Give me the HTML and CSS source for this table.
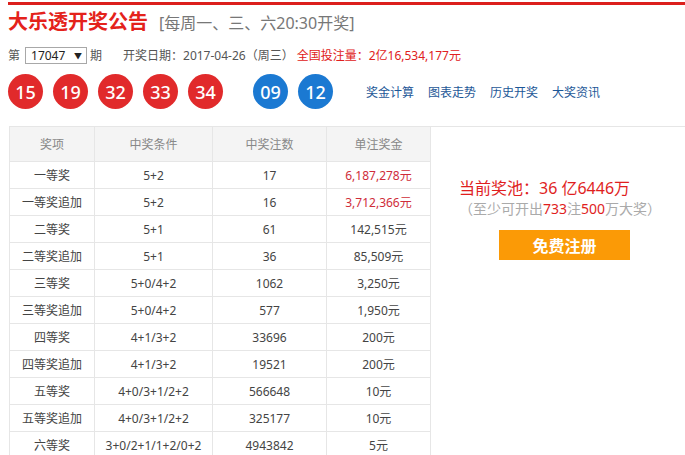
FILE: index.html
```html
<!DOCTYPE html>
<html lang="zh-CN">
<head>
<meta charset="utf-8">
<title>大乐透开奖公告</title>
<link rel="stylesheet" href="styles.css">
</head>
<body>
<div class="page">
  <div class="topbar"></div>
  <div class="title-row">
    <h1 class="title">大乐透开奖公告</h1>
    <span class="subtitle">[每周一、三、六20:30开奖]</span>
  </div>
  <div class="info-row">
    <span>第</span>
    <span class="select"><span class="sel-val">17047</span><span class="sel-arrow">▼</span></span>
    <span>期</span>
    <span class="date">开奖日期：2017-04-26（周三）</span>
    <span class="total">全国投注量：2亿16,534,177元</span>
  </div>
  <div class="balls-row">
    <span class="ball red">15</span>
    <span class="ball red">19</span>
    <span class="ball red">32</span>
    <span class="ball red">33</span>
    <span class="ball red">34</span>
    <span class="ball blue first-blue">09</span>
    <span class="ball blue">12</span>
    <nav class="links">
      <a href="#">奖金计算</a>
      <a href="#">图表走势</a>
      <a href="#">历史开奖</a>
      <a href="#">大奖资讯</a>
    </nav>
  </div>
  <div class="main">
    <table class="prize">
      <colgroup>
        <col class="c1"><col class="c2"><col class="c3"><col class="c4">
      </colgroup>
      <thead>
        <tr><th>奖项</th><th>中奖条件</th><th>中奖注数</th><th>单注奖金</th></tr>
      </thead>
      <tbody>
        <tr><td>一等奖</td><td>5+2</td><td>17</td><td class="hl">6,187,278元</td></tr>
        <tr><td>一等奖追加</td><td>5+2</td><td>16</td><td class="hl">3,712,366元</td></tr>
        <tr><td>二等奖</td><td>5+1</td><td>61</td><td>142,515元</td></tr>
        <tr><td>二等奖追加</td><td>5+1</td><td>36</td><td>85,509元</td></tr>
        <tr><td>三等奖</td><td>5+0/4+2</td><td>1062</td><td>3,250元</td></tr>
        <tr><td>三等奖追加</td><td>5+0/4+2</td><td>577</td><td>1,950元</td></tr>
        <tr><td>四等奖</td><td>4+1/3+2</td><td>33696</td><td>200元</td></tr>
        <tr><td>四等奖追加</td><td>4+1/3+2</td><td>19521</td><td>200元</td></tr>
        <tr><td>五等奖</td><td>4+0/3+1/2+2</td><td>566648</td><td>10元</td></tr>
        <tr><td>五等奖追加</td><td>4+0/3+1/2+2</td><td>325177</td><td>10元</td></tr>
        <tr><td>六等奖</td><td>3+0/2+1/1+2/0+2</td><td>4943842</td><td>5元</td></tr>
      </tbody>
    </table>
    <aside class="pool">
      <p class="pool-amount">当前奖池：36 亿6446万</p>
      <p class="pool-note">（至少可开出<em>733</em>注<em>500</em>万大奖）</p>
      <a class="reg-btn" href="#">免费注册</a>
    </aside>
  </div>
</div>
</body>
</html>
```

FILE: styles.css
```css
* { box-sizing: border-box; }
html, body { margin: 0; padding: 0; background: #fff; }
body {
  font-family: "Noto Sans", "Noto Sans CJK SC", sans-serif;
  color: #333;
  font-size: 12px;
  overflow: hidden;
}
.page { padding-left: 8px; width: 700px; }
.topbar { height: 3px; margin-top: 2px; background: #dc1f1c; }
.title-row {
  display: flex;
  align-items: baseline;
  gap: 11px;
  margin-top: 3px;
  height: 26px;
  line-height: 26px;
}
.title {
  margin: 0;
  font-size: 20px;
  font-weight: bold;
  color: #e4221b;
  font-family: "Noto Sans CJK SC", sans-serif;
}
.subtitle { font-size: 16px; color: #777; font-family: "Noto Sans", "Noto Sans CJK SC", sans-serif; }
.info-row {
  display: flex;
  align-items: center;
  margin-top: 10px;
  height: 22px;
  color: #555;
}
.select {
  display: inline-flex;
  align-items: center;
  justify-content: space-between;
  width: 62px;
  height: 17px;
  margin: 0 3px 0 5px;
  padding: 0 4px 0 5px;
  border: 1px solid #a8a8a8;
  color: #222;
  font-size: 12px;
}
.sel-arrow { font-size: 8px; color: #222; }
.date { margin-left: 21px; }
.total { margin-left: 3px; color: #e02020; }
.balls-row {
  display: flex;
  align-items: center;
  gap: 10px;
  margin-top: 8px;
  height: 35px;
}
.ball {
  width: 35px;
  height: 35px;
  border-radius: 50%;
  display: flex;
  align-items: center;
  justify-content: center;
  color: #fff;
  font-size: 18px;
  font-weight: 500;
}
.ball.red { background: #e12a2b; }
.ball.blue { background: #1b79d2; }
.first-blue { margin-left: 20px; }
.links { display: flex; gap: 14px; margin-left: 23px; }
.links a { color: #1d5797; text-decoration: none; font-size: 12px; }
.main {
  display: flex;
  margin-top: 17px;
  margin-left: 1px;
  border-top: 1px solid #e6e6e6;
}
.prize {
  border-collapse: collapse;
  width: 421px;
  table-layout: fixed;
  margin-top: -1px;
}
.c1 { width: 85px; }
.c2 { width: 118px; }
.c3 { width: 114px; }
.c4 { width: 104px; }
.prize th, .prize td {
  border: 1px solid #e6e6e6;
  text-align: center;
  padding: 0;
  font-size: 12px;
}
.prize th {
  height: 35px;
  background: #f4f4f4;
  color: #888;
  font-weight: normal;
}
.prize td { height: 27px; color: #444; }
.prize td.hl { color: #cf2d3a; }
.pool {
  flex: 1;
  padding-left: 28px;
  padding-top: 51px;
}
.pool p { margin: 0; }
.pool-amount { font-size: 16px; color: #e01e1e; line-height: 20px; }
.pool-note { font-size: 14px; color: #aaa; line-height: 20px; margin-top: 1px !important; }
.pool-note em { font-style: normal; color: #e01e1e; }
.reg-btn {
  display: flex;
  align-items: center;
  justify-content: center;
  width: 131px;
  height: 30px;
  margin: 11px 0 0 40px;
  background: #fb9a06;
  color: #fff;
  font-size: 16px;
  font-weight: bold;
  text-decoration: none;
  font-family: "Noto Sans CJK SC", sans-serif;
}
```
